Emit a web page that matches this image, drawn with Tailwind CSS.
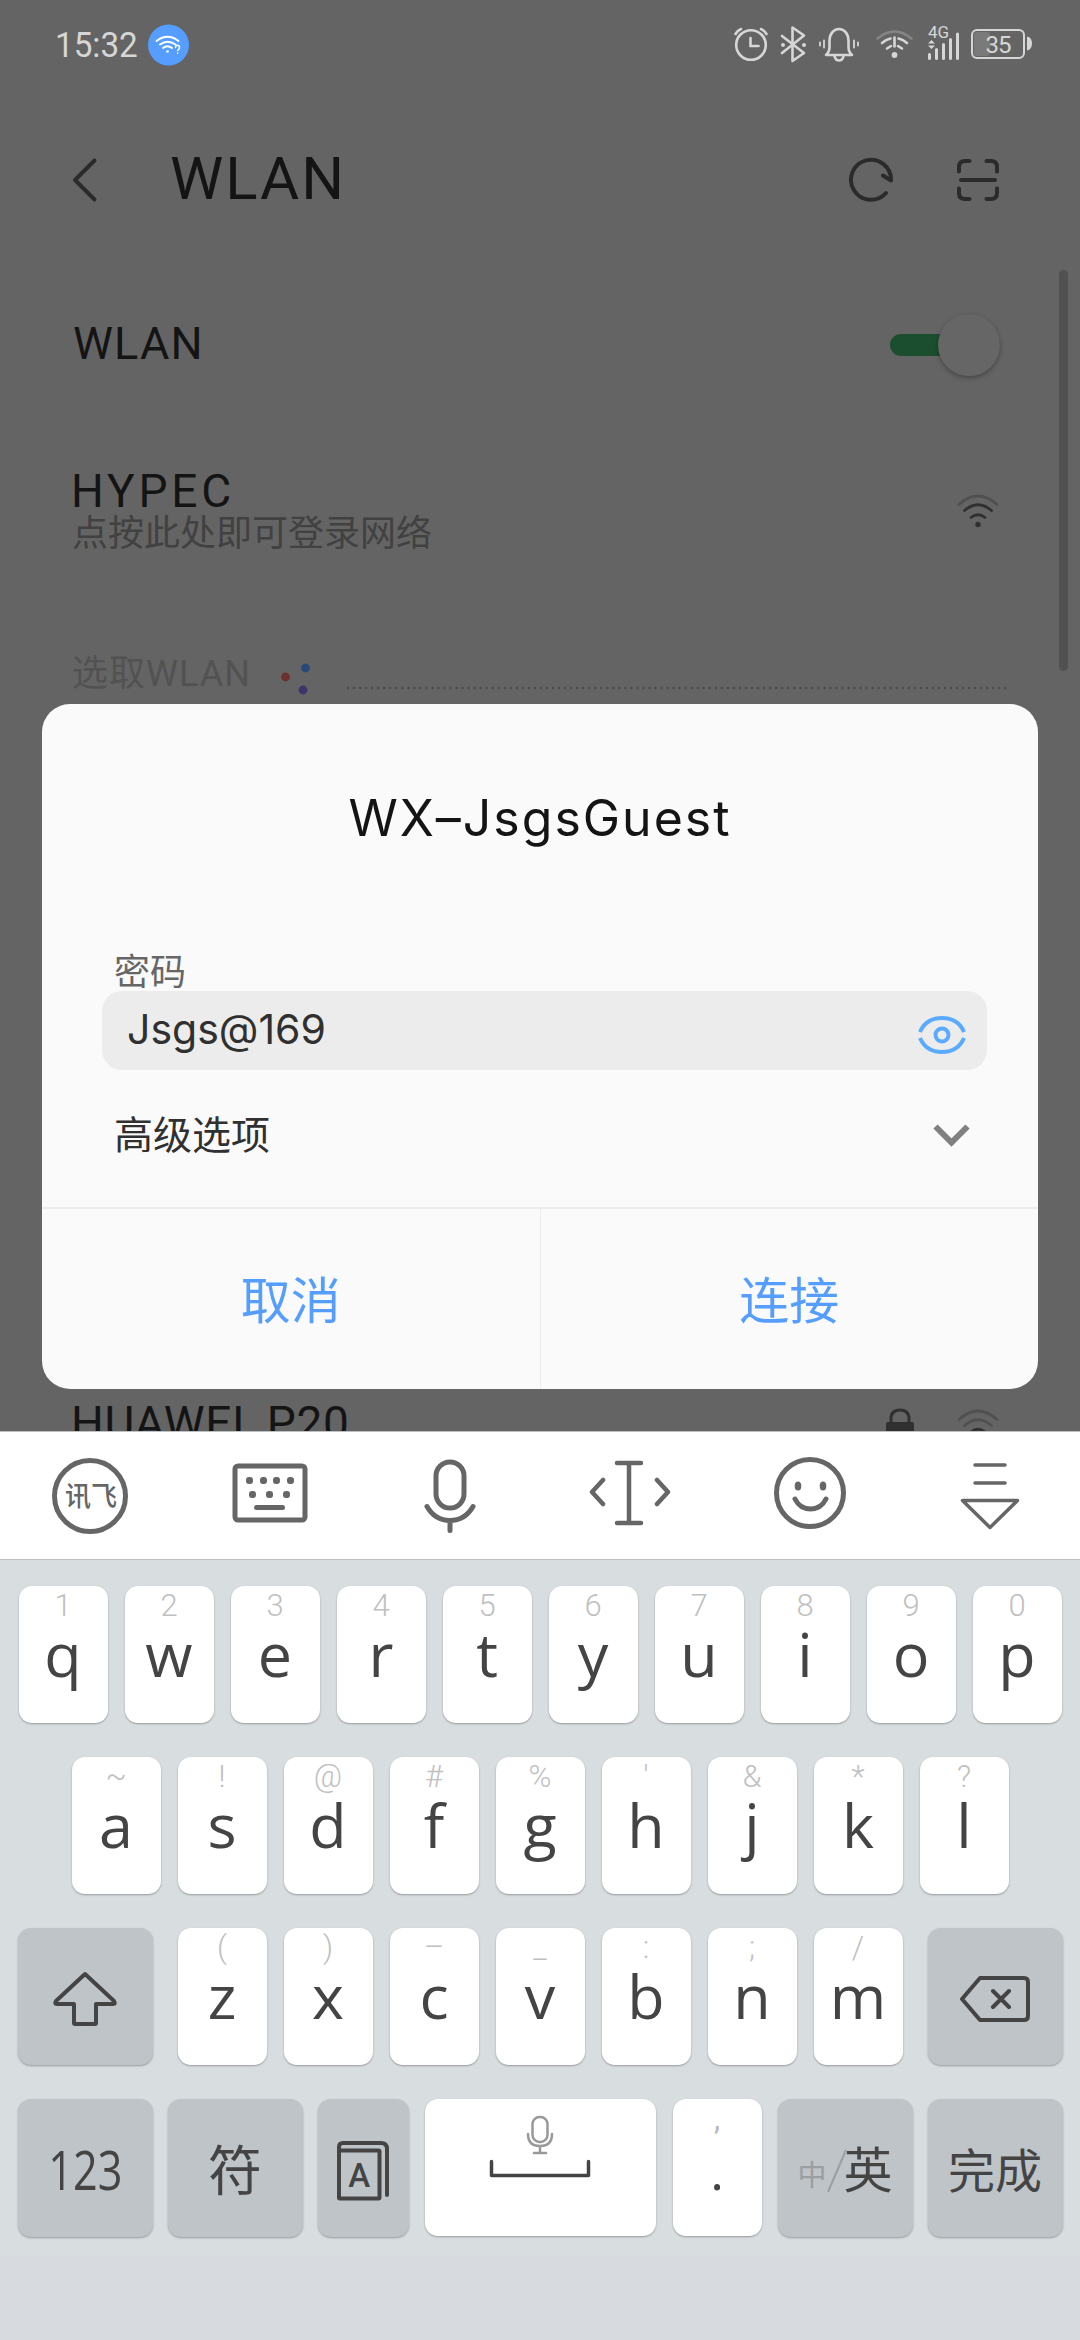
<!DOCTYPE html>
<html lang="zh-CN">

<head>
  <meta charset="UTF-8" />
  <meta name="viewport" content="width=device-width, initial-scale=1.0" />
  <title>WLAN</title>
  <script src="https://cdn.jsdelivr.net/npm/@tailwindcss/browser@4"></script>
</head>

<body class="font-['Roboto','Noto_Sans_CJK_SC',sans-serif]">
  <div class="relative w-[1080px] h-[2340px] flex flex-col overflow-hidden bg-[#646464]">
    <!-- settings page, dimmed -->
    <main class="relative h-[1431px] flex flex-col overflow-hidden text-[#141414]">
      <header class="h-[90px] flex items-center justify-between pl-[55px] pr-[48px] text-[#d6d6d6]">
        <div class="flex items-center">
          <span class="w-[93px] text-[35px] leading-[35px] whitespace-nowrap"><span class="inline-block origin-left scale-x-[0.95]">15:32</span></span>
          <svg class="w-[41px] h-[42px]" viewBox="0 0 41 42" fill="none" stroke="#fff" stroke-width="2" stroke-linecap="round">
            <circle cx="20.500" cy="21" r="20.500" fill="#559eff" stroke="none" />
            <path d="M8.500 17q11-8.500 22 0M12 20.500q7.500-5.500 15.500 0M15 24q4.500-3.500 9 0" />
            <circle cx="19.500" cy="27.500" r="1.300" fill="#fff" stroke="none" />
            <path d="M27.500 23.500c0-3 4-3 4 0q0 1.500-1.800 3M29.700 29v.3" stroke-width="1.500" />
          </svg>
        </div>
        <svg class="w-[300px] h-[44px]" viewBox="732 24 300 44" fill="none" stroke="#d6d6d6" stroke-width="2.600" stroke-linecap="round">
          <circle cx="751" cy="46" r="14.800" />
          <path d="M750.500 39v8h8" />
          <path d="M735.500 35q2-3.500 5.500-5M766.500 35q-2-3.500-5.500-5" />
          <path d="M782 37l22 17-11.500 8V28.500l11.500 8L782 54" stroke-linejoin="round" />
          <circle cx="783" cy="46" r="2" fill="#d6d6d6" stroke="none" />
          <circle cx="804" cy="46" r="2" fill="#d6d6d6" stroke="none" />
          <path d="M826 56h26q-3.500-3-3.500-8v-6c0-7-4-12-9.500-12s-9.500 5-9.500 12v6q0 5-3.500 8zM834.500 57q1 4.500 4.500 4.500t4.500-4.500" stroke-linejoin="round" />
          <path d="M824 41.500v7M820 43.500v3M854 41.500v7M858 43.500v3" stroke-width="1.800" />
          <path d="M877.500 39.500q17-14 34 0" stroke="#858585" />
          <path d="M882 44q4-3.500 8.500-4.500M898.500 39.500q4.500 1 8.500 4.500M887 49.500l4-2.500M898 47l4 2.500" />
          <path d="M894.500 38.500v9" />
          <circle cx="894.500" cy="56" r="2.900" fill="#d6d6d6" stroke="none" />
          <text x="928" y="39" font-size="17" fill="#d6d6d6" stroke="none" textLength="21">4G</text>
          <path d="M929.500 55.500v4M936.500 50.500v9M943.500 45.500v14M950.500 40.500v19M957.500 35v24.500" stroke-width="3" />
          <path d="M928 44.500l3.500-3.500 3.500 3.500zM928 46.500l3.500 3.500 3.500-3.500z" fill="#d6d6d6" stroke="none" />
          <rect x="974" y="33" width="16" height="24" rx="3" fill="#7a7a7a" stroke="none" />
          <rect x="972" y="31" width="52" height="28" rx="5" stroke-width="2" />
          <path d="M1027 37.500q5 1 5 7t-5 7z" fill="#d6d6d6" stroke="none" />
          <text x="985.500" y="54" font-size="24" fill="#d6d6d6" stroke="none" textLength="26">35</text>
        </svg>
      </header>

      <div class="h-[180px] flex items-center pl-[72px] pr-[80px] text-[#2b2b2b]">
        <svg class="w-[26px] h-[46px]" viewBox="0 0 26 46" fill="none" stroke="currentColor" stroke-width="4" stroke-linecap="round" stroke-linejoin="round">
          <path d="M22.500 3.500L3 23l19.500 19.500" />
        </svg>
        <h1 class="ml-[72px] pb-[3px] flex-1 text-[60px] leading-[60px] tracking-[2px] text-[#141414]">WLAN</h1>
        <svg class="w-[46px] h-[46px] mr-[62px]" viewBox="0 0 46 46" fill="none" stroke="currentColor" stroke-width="4" stroke-linecap="round" stroke-linejoin="round">
          <path d="M38 36A20 20 0 1 1 43 23.500L35 18.500" />
        </svg>
        <svg class="w-[44px] h-[44px]" viewBox="0 0 44 44" fill="none" stroke="currentColor" stroke-width="4" stroke-linecap="round">
          <path d="M3 13.500V9q0-6 6-6h4.500M30.500 3H35q6 0 6 6v4.500M41 30.500V35q0 6-6 6h-4.500M13.500 41H9q-6 0-6-6v-4.500M5 22h34" />
        </svg>
      </div>

      <div class="h-[150px] flex items-center justify-between pl-[73px] pr-[80px]">
        <span class="pb-[4px] text-[45px] leading-[45px] tracking-[1.2px]">WLAN</span>
        <div class="relative w-[110px] h-[22px] rounded-full bg-[#1b4e2f]">
          <div class="absolute right-0 -top-5 size-[62px] rounded-full bg-[#666666] shadow-[0_2px_5px_rgba(0,0,0,0.3)]"></div>
        </div>
      </div>

      <div class="h-[182px] mb-[8px] flex items-center justify-between pl-[71px] pr-[81px]">
        <div class="pt-[1px]">
          <div class="text-[46px] leading-[44px] tracking-[3.8px]">HYPEC</div>
          <div class="pl-px text-[36px] leading-[42px] text-[#414141]">点按此处即可登录网络</div>
        </div>
        <svg class="w-[42px] h-[34px]" viewBox="0 0 42 34" fill="none" stroke="#303030" stroke-width="2.800" stroke-linecap="round">
          <path d="M2 10.500Q21-6.500 40 10.500" stroke="#505050" />
          <path d="M7.500 16.500q13.500-11.500 27 0M14 23.500q7-5.500 14 0" />
          <circle cx="21" cy="30.500" r="2.700" fill="#303030" stroke="none" />
        </svg>
      </div>

      <div class="h-[130px] flex items-center pl-[72px] pr-[71px] text-[#525252]">
        <span class="w-[207px] pb-[2px] text-[36px] leading-[40px] tracking-[1px]">选取WLAN</span>
        <svg class="w-[32px] h-[34px] mt-[7px]" viewBox="279 663 32 34">
          <circle cx="285.500" cy="678" r="4.400" fill="#6d302c" />
          <circle cx="305.500" cy="669" r="4.400" fill="#274878" />
          <circle cx="303" cy="691" r="4.400" fill="#3e346b" />
        </svg>
        <svg class="w-[663px] h-[4px] ml-auto mt-[26px]" viewBox="0 0 663 4">
          <path d="M2 2H662" stroke="#4b4b4b" stroke-width="2.400" stroke-linecap="round" stroke-dasharray="0 6.030" />
        </svg>
      </div>

      <div class="mt-auto h-[31px] shrink-0 flex items-start justify-between pl-[71px] pr-[81px]">
        <span class="text-[46px] leading-[46px] tracking-[0.7px] whitespace-nowrap">HUAWEI_P20</span>
        <div class="flex items-start gap-[42px] pt-[8px]">
          <svg class="w-[30px] h-[40px]" viewBox="0 0 30 40">
            <path d="M6 15v-4q0-9 9-9t9 9v4" fill="none" stroke="#303030" stroke-width="3" />
            <rect x="1" y="14" width="28" height="24" rx="2" fill="#303030" />
          </svg>
          <svg class="w-[42px] h-[34px]" viewBox="0 0 42 34" fill="none" stroke="#505050" stroke-width="2.800" stroke-linecap="round">
            <path d="M2 11.500Q21-5.500 40 11.500M7.500 17.500q13.500-11.500 27 0" />
            <path d="M14 24q7-5.500 14 0" stroke="#303030" />
          </svg>
        </div>
      </div>

      <div class="absolute left-[1059px] top-[270px] w-[9px] h-[401px] rounded-full bg-[#515151]"></div>
    </main>

    <!-- password dialog -->
    <section class="absolute left-[42px] top-[704px] w-[996px] h-[685px] flex flex-col rounded-[28px] overflow-hidden bg-[#fafafa]">
      <h2 class="pt-[84px] text-center text-[50px] leading-[60px] tracking-[2px] font-['Inter',sans-serif] text-[#141414]">WX–JsgsGuest</h2>
      <div class="mt-[107px] pl-[72px] text-[36px] leading-[36px] text-[#666]">密码</div>
      <div class="ml-[60px] w-[885px] h-[79px] flex items-center justify-between rounded-[20px] bg-[#ececec] pl-[25px] pr-[20px]">
        <span class="pb-[4px] text-[41px] leading-[50px] font-['Inter',sans-serif] text-[#303030]">Jsgs@169</span>
        <svg class="w-[50px] h-[40px] mt-[8px]" viewBox="0 0 50 40" fill="none" stroke="#5aaaff" stroke-width="4">
          <path d="M3 17Q9 3 25 3t22 14M3 23q6 14 22 14t22-14" />
          <circle cx="25" cy="20" r="6.500" />
        </svg>
      </div>
      <div class="h-[137px] flex items-center justify-between pl-[72px] pr-[68px] pb-[6px]">
        <span class="text-[39px] leading-[44px] text-[#303030]">高级选项</span>
        <svg class="w-[37px] h-[24px]" viewBox="0 0 37 24" fill="none" stroke="#808080" stroke-width="6">
          <path d="M2.500 2.500l16 16 16-16" />
        </svg>
      </div>
      <div class="flex-1 flex border-t-2 border-[#ececec] text-[50px] leading-[60px] text-[#559eff]">
        <button class="flex-1 pt-[5px] border-r border-[#ececec]">取消</button>
        <button class="flex-1 pt-[5px]">连接</button>
      </div>
    </section>

    <!-- input method -->
    <div class="h-[129px] flex items-center bg-white border-y border-[#bcc1c4]">
      <div class="flex-1 flex justify-center">
        <svg class="w-[76px] h-[78px]" viewBox="0 0 76 78">
          <circle cx="38" cy="39" r="35.500" fill="none" stroke="#666" stroke-width="5" />
          <text x="13" y="49" font-size="27" font-weight="500" fill="#666" textLength="52" lengthAdjust="spacingAndGlyphs">讯飞</text>
        </svg>
      </div>
      <div class="flex-1 flex justify-center pb-[5px]">
        <svg class="w-[76px] h-[60px]" viewBox="0 0 76 60" fill="#666">
          <rect x="3" y="3" width="70" height="54" rx="3" fill="none" stroke="#666" stroke-width="5" />
          <rect x="14" y="14" width="7" height="7" rx="3" /><rect x="28" y="14" width="7" height="7" rx="3" /><rect x="41" y="14" width="7" height="7" rx="3" /><rect x="55" y="14" width="7" height="7" rx="3" />
          <rect x="17" y="28" width="7" height="7" rx="3" /><rect x="34" y="28" width="7" height="7" rx="3" /><rect x="51" y="28" width="7" height="7" rx="3" />
          <rect x="22" y="42" width="31" height="5" rx="2.500" />
        </svg>
      </div>
      <div class="flex-1 flex justify-center">
        <svg class="w-[54px] h-[76px]" viewBox="0 0 54 76" fill="none" stroke="#666" stroke-width="5" stroke-linecap="round">
          <rect x="13" y="4" width="28" height="46" rx="14" />
          <path d="M4 48.500q8 14 23 14t23-14M27 63v9.500" />
        </svg>
      </div>
      <div class="flex-1 flex justify-center pb-[5px]">
        <svg class="w-[82px] h-[68px]" viewBox="0 0 82 68" fill="none" stroke="#666" stroke-width="4.500" stroke-linecap="round" stroke-linejoin="round">
          <path d="M28 4h24M28 64h24M40 4v60M14 21L3 33l11 12M68 21l11 12-11 12" />
        </svg>
      </div>
      <div class="flex-1 flex justify-center pb-[5px]">
        <svg class="w-[74px] h-[74px]" viewBox="0 0 74 74" fill="none" stroke="#666" stroke-width="5" stroke-linecap="round">
          <circle cx="37" cy="37" r="33.500" />
          <path d="M22 43q5 10 15.500 10T53 43" />
          <ellipse cx="25" cy="30" rx="3.300" ry="4.500" fill="#666" stroke="none" />
          <ellipse cx="50" cy="30" rx="3.300" ry="4.500" fill="#666" stroke="none" />
        </svg>
      </div>
      <div class="flex-1 flex justify-center">
        <svg class="w-[62px] h-[70px]" viewBox="0 0 62 70" fill="none" stroke="#666" stroke-width="3.500" stroke-linecap="round" stroke-linejoin="round">
          <path d="M16 4h30M16 22h30M3.500 39.500h55L31 66.500z" />
        </svg>
      </div>
    </div>

    <div class="h-[696px] flex flex-col items-center gap-[34px] pt-[26px] bg-[#d8dddf] text-[#444]">
      <div id="row1" class="flex gap-[17px]"></div>
      <div id="row2" class="flex gap-[17px]"></div>
      <div class="flex gap-[25px]">
        <div class="w-[135px] h-[137px] flex items-center justify-center rounded-[13px] bg-[#bfc4c8] shadow-[0_1px_2px_rgba(0,0,0,0.3)]">
          <svg class="w-[66px] h-[56px] mt-[5px]" viewBox="0 0 66 56" fill="none" stroke="#444" stroke-width="4" stroke-linejoin="round">
            <path d="M33 3L4 30q-2 3 1 3h17v19q0 1 1 1h20q1 0 1-1V33h17q3 0 1-3z" />
          </svg>
        </div>
        <div id="row3" class="flex gap-[17px]"></div>
        <div class="w-[135px] h-[137px] flex items-center justify-center rounded-[13px] bg-[#bfc4c8] shadow-[0_1px_2px_rgba(0,0,0,0.3)]">
          <svg class="w-[72px] h-[48px] mt-[5px]" viewBox="0 0 72 48" fill="none" stroke="#444" stroke-width="4" stroke-linejoin="round" stroke-linecap="round">
            <path d="M21 3h44q4 0 4 4v34q0 4-4 4H21L3 24zM34 16l16 16M50 16L34 32" />
          </svg>
        </div>
      </div>
      <div class="flex gap-[16px]">
        <div class="w-[135px] h-[138px] flex items-center justify-center rounded-[13px] bg-[#bfc4c8] shadow-[0_1px_2px_rgba(0,0,0,0.3)] pt-[2px] text-[54px] font-['Open_Sans',sans-serif]"><span class="inline-block scale-x-[0.8]">123</span></div>
        <div class="w-[135px] h-[138px] flex items-center justify-center rounded-[13px] bg-[#bfc4c8] shadow-[0_1px_2px_rgba(0,0,0,0.3)] pt-[8px] -ml-px text-[54px]">符</div>
        <div class="w-[91px] h-[138px] flex items-center justify-center rounded-[13px] bg-[#bfc4c8] shadow-[0_1px_2px_rgba(0,0,0,0.3)] -ml-px">
          <svg class="w-[54px] h-[60px] mt-[6px]" viewBox="0 0 54 60" fill="none" stroke="#444" stroke-width="4">
            <path d="M3 10V6q0-4 4-4h38q6 0 6 6v46" stroke-linecap="round" />
            <rect x="3" y="9.500" width="40.500" height="48" rx="1" />
            <text x="23.200" y="46" text-anchor="middle" font-size="33" font-weight="500" fill="#444" stroke="none">A</text>
          </svg>
        </div>
        <div class="w-[231px] h-[137px] flex flex-col items-center rounded-[13px] bg-white shadow-[0_1px_2px_rgba(0,0,0,0.3)] pt-[16px]">
          <svg class="w-[28px] h-[40px]" viewBox="0 0 28 40" fill="none" stroke="#999" stroke-width="2.500" stroke-linecap="round">
            <rect x="6.500" y="2" width="15" height="25" rx="7" />
            <path d="M2 19q0 12 12 12t12-12M14 31v7M8 38h12" />
          </svg>
          <svg class="w-[102px] h-[20px] mt-[4px]" viewBox="0 0 102 20" fill="none" stroke="#444" stroke-width="3.500" stroke-linecap="round" stroke-linejoin="round">
            <path d="M2.500 2.500v14h97v-14" />
          </svg>
        </div>
        <div class="ml-px w-[89px] h-[137px] flex flex-col items-center rounded-[13px] bg-white shadow-[0_1px_2px_rgba(0,0,0,0.3)]">
          <span class="pt-[3px] text-[31px] leading-[34px] text-[#b8b8b8]">,</span>
          <span class="pt-[6px] text-[52px] leading-[56px] font-['Open_Sans',sans-serif]">.</span>
        </div>
        <div class="w-[135px] h-[138px] flex items-center justify-center rounded-[13px] bg-[#bfc4c8] shadow-[0_1px_2px_rgba(0,0,0,0.3)] leading-none">
          <span class="pt-[16px] text-[29px] text-[#9a9fa2]">中</span>
          <svg class="w-[20px] h-[44px] mt-[6px]" viewBox="0 0 20 44"><path d="M1 43L19 1" stroke="#9a9fa2" stroke-width="2" /></svg>
          <span class="text-[49px] pt-[6px] -ml-[3px]">英</span>
        </div>
        <div class="w-[135px] h-[138px] flex items-center justify-center rounded-[13px] bg-[#bfc4c8] shadow-[0_1px_2px_rgba(0,0,0,0.3)] -ml-px pt-[6px] text-[47px] leading-none">完成</div>
      </div>
    </div>
    <div class="flex-1 bg-[#d7dadf]"></div>
  </div>

  <script>
    var rows = {
      row1: ['1q', '2w', '3e', '4r', '5t', '6y', '7u', '8i', '9o', '0p'],
      row2: ['~a', '!s', '@d', '#f', '%g', "'h", '&j', '*k', '?l'],
      row3: ['(z', ')x', '–c', '_v', ':b', ';n', '/m']
    }
    Object.keys(rows).forEach(function (id) {
      document.getElementById(id).innerHTML = rows[id].map(function (key) {
        return '<div class="w-[89px] h-[137px] flex flex-col items-center rounded-[13px] bg-white shadow-[0_1px_2px_rgba(0,0,0,0.3)]">' +
          '<span class="pt-[3px] text-[31px] leading-[34px] font-light text-[#c0c0c0]">' + key[0].replace('&', '&amp;') + '</span>' +
          '<span class="text-[61px] leading-[62px] font-[\'Open_Sans\',sans-serif]">' + key[1] + '</span></div>'
      }).join('')
    })
  </script>
</body>

</html>
